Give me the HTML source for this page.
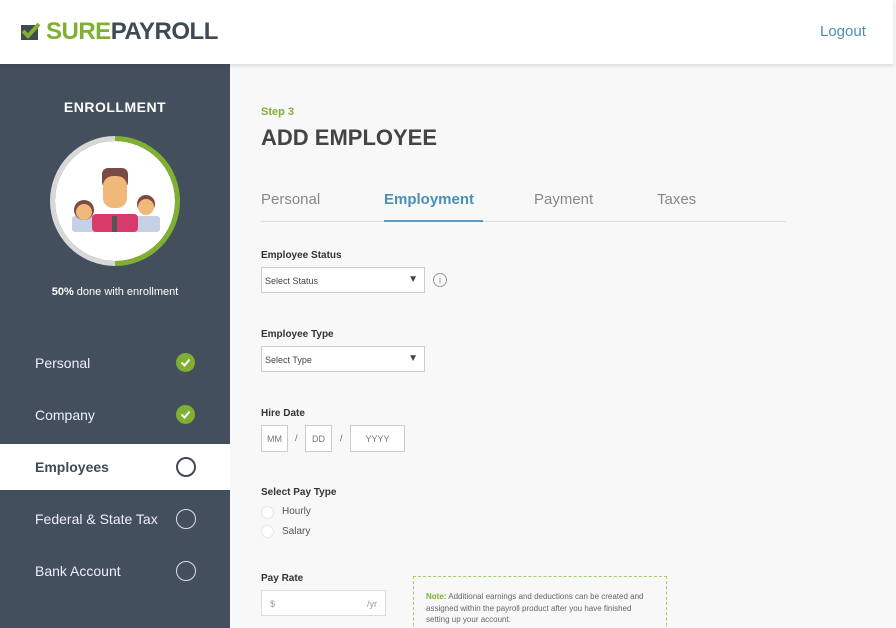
<!DOCTYPE html>
<html><head><style>
*{margin:0;padding:0;box-sizing:border-box}
html,body{width:896px;height:628px;overflow:hidden}
body{background:#f8f8f8;font-family:"Liberation Sans",sans-serif;position:relative}
.hdr{position:absolute;left:0;top:0;width:893px;height:64px;background:#fff;box-shadow:0 2px 4px rgba(0,0,0,.12);z-index:2}
.logo{position:absolute;left:21px;top:18px;font-weight:bold;font-size:24px;letter-spacing:-0.5px}
.logout{position:absolute;left:820px;top:23px;color:#4a90b8;font-size:15px}
.side{position:absolute;left:0;top:64px;width:230px;height:564px;background:#434f5c;color:#fff}
.ab{position:absolute}
.nav{position:absolute;left:35px;font-size:14px;color:#eef}
.chk{position:absolute;left:176px;width:19px;height:19px;border-radius:50%;background:#7fb032}
.oc{position:absolute;left:176px;width:20px;height:20px;border-radius:50%;border:1.5px solid #dde}
.lbl{position:absolute;left:261px;font-size:10px;font-weight:bold;color:#333}
.sel{position:absolute;left:261px;width:164px;height:26px;background:#fff;border:1px solid #ccc;font-size:9px;color:#444;padding:8px 3px}
.sel span{position:absolute;right:6px;top:6px;font-size:10px}
.box{position:absolute;top:425px;height:27px;background:#fff;border:1px solid #ccc;font-size:9px;color:#777;text-align:center;padding-top:8px}
.rad{position:absolute;left:261px;width:13px;height:13px;border-radius:50%;background:#fff;border:1px solid #e6e6e6}
.rt{position:absolute;left:282px;font-size:10px;color:#555}
</style></head><body>
<div class="hdr">
<div class="logo"><svg width="20" height="18" style="vertical-align:-2px;margin-right:5px"><rect x="0" y="2" width="17" height="15" fill="#3f4a55"/><path d="M2 8l5 5 11-12" stroke="#7fb032" stroke-width="4" fill="none"/></svg><span style="color:#7fb032">SURE</span><span style="color:#3f4a55">PAYROLL</span></div>
<div class="logout">Logout</div>
</div>
<div class="side">
<div class="ab" style="left:0;width:230px;top:35px;text-align:center;font-weight:bold;font-size:14px;letter-spacing:.5px">ENROLLMENT</div>
<svg class="ab" style="left:50px;top:72px" width="130" height="130">
<circle cx="65" cy="65" r="60" fill="#fff"/>
<path d="M65 2.5A62.5 62.5 0 0 0 65 127.5" stroke="#d8d8d8" stroke-width="5" fill="none"/>
<path d="M65 2.5A62.5 62.5 0 0 1 65 127.5" stroke="#7fb032" stroke-width="5" fill="none"/>
<rect x="22" y="80" width="26" height="16" rx="3" fill="#c5d2e6"/>
<circle cx="34" cy="74" r="10" fill="#7a4a44"/><circle cx="34" cy="76" r="8" fill="#f0b97a"/>
<rect x="82" y="80" width="28" height="16" rx="3" fill="#c5d2e6"/>
<circle cx="96" cy="68" r="9" fill="#7a4a44"/><circle cx="96" cy="71" r="8" fill="#f0b97a"/>
<rect x="42" y="78" width="46" height="18" rx="4" fill="#d83a6b"/>
<rect x="62" y="80" width="5" height="16" fill="#555"/>
<rect x="52" y="32" width="26" height="20" rx="6" fill="#7a4a44"/>
<rect x="53" y="40" width="24" height="32" rx="10" fill="#f0b97a"/>
</svg>
<div class="ab" style="left:0;width:230px;top:222px;text-align:center;font-size:11px"><b>50%</b> done with enrollment</div>
<div class="nav" style="top:291px">Personal</div><div class="chk" style="top:289px"><svg width="19" height="19"><path d="M5.5 9.5l3 3 5-6" stroke="#fff" stroke-width="2" fill="none"/></svg></div>
<div class="nav" style="top:343px">Company</div><div class="chk" style="top:341px"><svg width="19" height="19"><path d="M5.5 9.5l3 3 5-6" stroke="#fff" stroke-width="2" fill="none"/></svg></div>
<div class="ab" style="left:0;top:380px;width:230px;height:46px;background:#fff"></div>
<div class="nav" style="top:395px;color:#3f4a55;font-weight:bold">Employees</div><div class="oc" style="top:393px;border:2px solid #3f4a55"></div>
<div class="nav" style="top:447px">Federal &amp; State Tax</div><div class="oc" style="top:445px"></div>
<div class="nav" style="top:499px">Bank Account</div><div class="oc" style="top:497px"></div>
</div>
<div class="ab" style="left:261px;top:106px;font-size:11px;font-weight:bold;color:#7fb032">Step 3</div>
<div class="ab" style="left:261px;top:125px;font-size:22px;font-weight:bold;color:#444">ADD EMPLOYEE</div>
<div class="ab" style="left:261px;top:191px;font-size:15px;color:#888">Personal</div>
<div class="ab" style="left:384px;top:191px;font-size:15px;color:#4a90b8;font-weight:bold">Employment</div>
<div class="ab" style="left:534px;top:191px;font-size:15px;color:#888">Payment</div>
<div class="ab" style="left:657px;top:191px;font-size:15px;color:#888">Taxes</div>
<div class="ab" style="left:261px;top:221px;width:525px;height:1px;background:#ddd"></div>
<div class="ab" style="left:384px;top:220px;width:99px;height:2px;background:#5a9cc0"></div>
<div class="lbl" style="top:250px">Employee Status</div>
<div class="sel" style="top:267px">Select Status<span>▼</span></div>
<div class="ab" style="left:433px;top:273px;width:14px;height:14px;border-radius:50%;border:1px solid #999;font-size:9px;color:#888;text-align:center;line-height:12px">i</div>
<div class="lbl" style="top:329px">Employee Type</div>
<div class="sel" style="top:346px">Select Type<span>▼</span></div>
<div class="lbl" style="top:408px">Hire Date</div>
<div class="box" style="left:261px;width:27px">MM</div>
<div class="ab" style="left:295px;top:433px;font-size:9px;color:#666">/</div>
<div class="box" style="left:305px;width:27px">DD</div>
<div class="ab" style="left:340px;top:433px;font-size:9px;color:#666">/</div>
<div class="box" style="left:350px;width:55px">YYYY</div>
<div class="lbl" style="top:487px">Select Pay Type</div>
<div class="rad" style="top:506px"></div><div class="rt" style="top:506px">Hourly</div>
<div class="rad" style="top:525px"></div><div class="rt" style="top:526px">Salary</div>
<div class="lbl" style="top:573px">Pay Rate</div>
<div class="ab" style="left:261px;top:590px;width:125px;height:26px;background:#fff;border:1px solid #ddd;font-size:9px;color:#999;padding:8px 8px">$<span style="float:right">/yr</span></div>
<div class="ab" style="left:413px;top:576px;width:254px;height:60px;border:1px dashed #a9cc66;font-size:8px;color:#666;padding:14px 12px;line-height:11.5px"><b style="color:#7fb032">Note:</b> Additional earnings and deductions can be created and assigned within the payroll product after you have finished setting up your account.</div>
</body></html>
